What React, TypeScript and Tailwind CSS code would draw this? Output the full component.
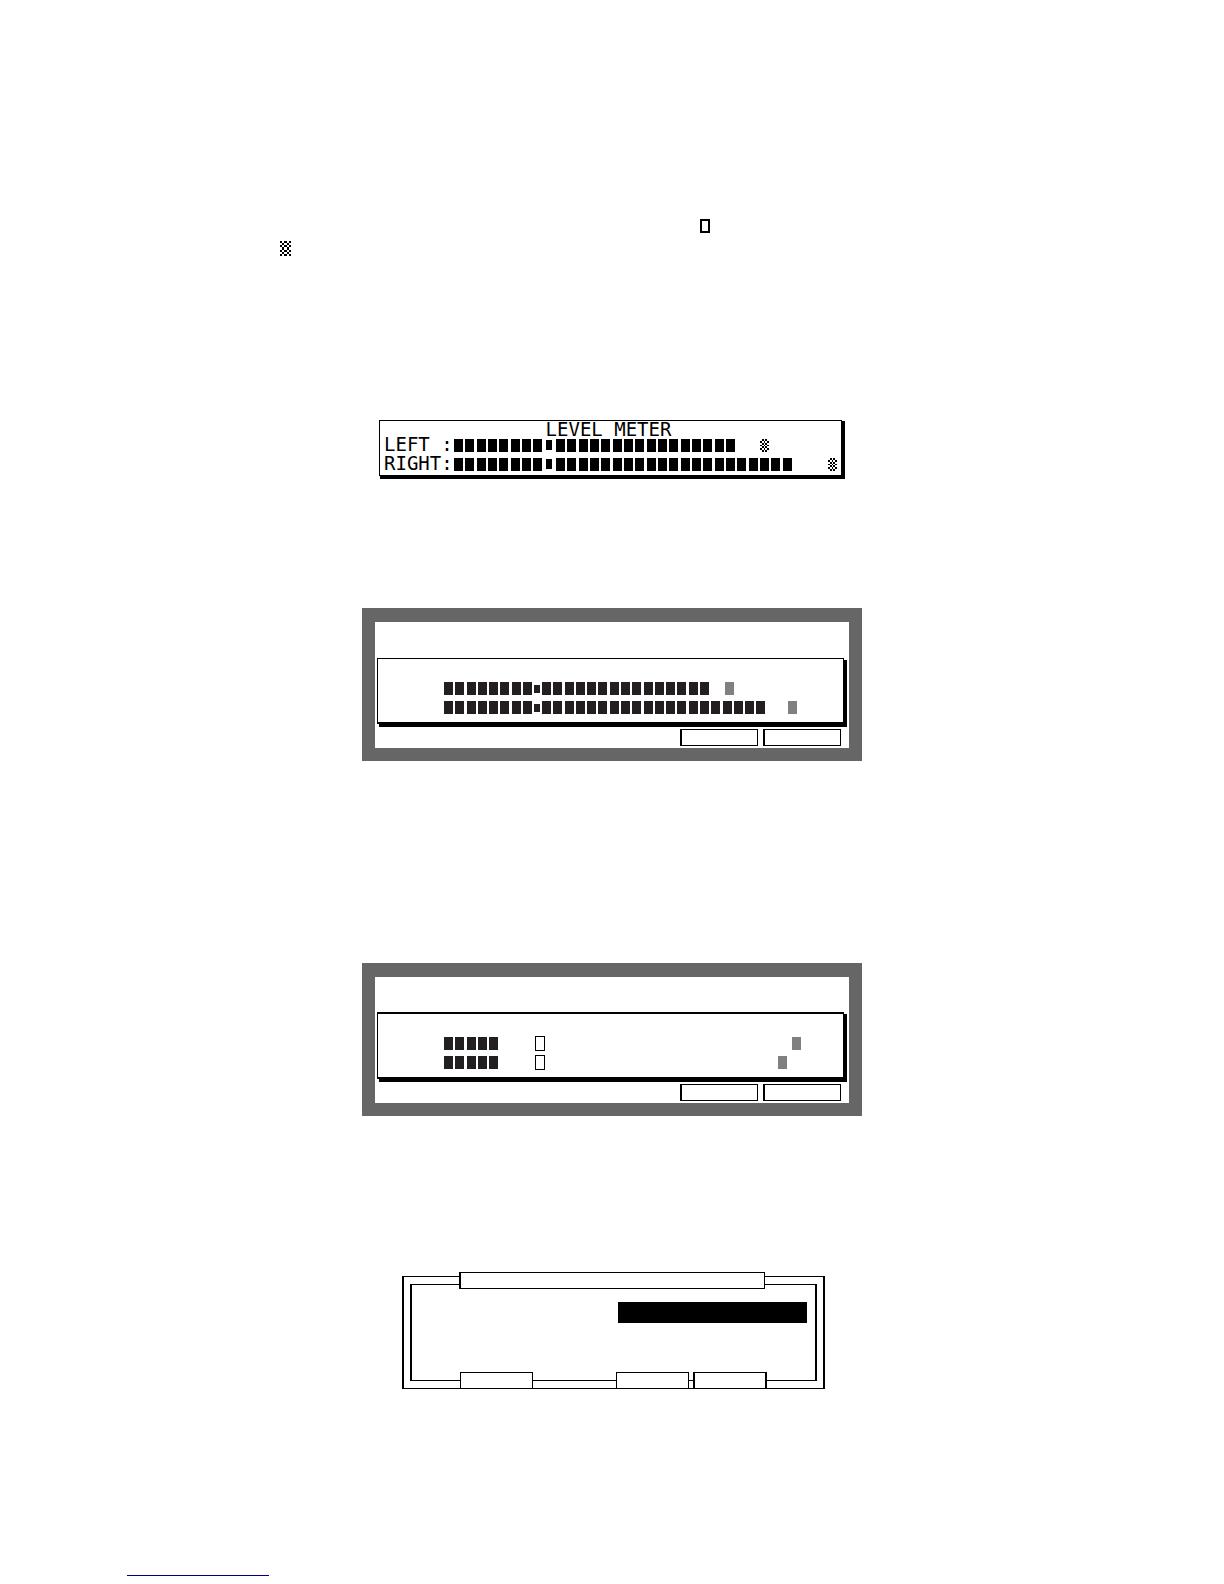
type MeterItem = {
  kind: "bar" | "dot" | "box" | "peak" | "checker";
  x: number;
  width: number;
};

// n bars laid side by side, the first one at x
const bars = (n: number, x: number, pitch = 79 / 7): MeterItem[] =>
  Array.from({ length: n }, (_, i) => ({
    kind: "bar",
    x: Math.round(x + i * pitch),
    width: 9,
  }));

interface CheckerProps {
  x?: number;
  y?: number;
  width: number;
  height: number;
  odd?: boolean;
}

function Checker({ x = 0, y = 0, width, height, odd = false }: CheckerProps) {
  const cells = [];
  for (let row = 0; row < 7; row++) {
    for (let col = 0; col < 5; col++) {
      if ((row + col) % 2 === (odd ? 1 : 0)) {
        const left = Math.round((col * width) / 5);
        const top = Math.round((row * height) / 7);
        cells.push(
          <rect
            key={`${row}-${col}`}
            x={x + left}
            y={y + top}
            width={Math.round(((col + 1) * width) / 5) - left}
            height={Math.round(((row + 1) * height) / 7) - top}
          />
        );
      }
    }
  }
  return <g fill="#000">{cells}</g>;
}

interface MeterProps {
  items: MeterItem[];
  color: string;
  dotHeight?: number;
}

function Meter({ items, color, dotHeight = 8 }: MeterProps) {
  return (
    <svg width="386" height="15" shapeRendering="crispEdges" className="block shrink-0">
      {items.map(({ kind, x, width }) => {
        if (kind === "checker") {
          return <Checker key={x} x={x} y={1} width={width} height={13} odd />;
        }
        if (kind === "box") {
          return (
            <g key={x}>
              <rect x={x} y={0} width={width} height={15} fill="#000" />
              <rect x={x + 1} y={1} width={width - 2} height={13} fill="#fff" />
            </g>
          );
        }
        if (kind === "dot") {
          const y = dotHeight === 8 ? 4 : 2;
          return <rect key={x} x={x} y={y} width={width} height={dotHeight} fill={color} />;
        }
        return (
          <rect
            key={x}
            x={x}
            y={1}
            width={width}
            height={13}
            fill={kind === "peak" ? "#808080" : color}
          />
        );
      })}
    </svg>
  );
}

const lcdLeft: MeterItem[] = [
  ...bars(8, 0, 34 / 3),
  { kind: "dot", x: 92, width: 6 },
  ...bars(16, 102, 34 / 3),
  { kind: "checker", x: 306, width: 9 },
];
const lcdRight: MeterItem[] = [
  ...bars(8, 0, 34 / 3),
  { kind: "dot", x: 92, width: 6 },
  ...bars(21, 102, 34 / 3),
  { kind: "checker", x: 374, width: 9 },
];

const playRows: MeterItem[][] = [
  [
    ...bars(8, 0),
    { kind: "dot", x: 90, width: 6 },
    ...bars(15, 98),
    { kind: "peak", x: 281, width: 9 },
  ],
  [
    ...bars(8, 0),
    { kind: "dot", x: 90, width: 6 },
    ...bars(20, 98),
    { kind: "peak", x: 344, width: 9 },
  ],
];

const holdRows: MeterItem[][] = [
  [...bars(5, 0), { kind: "box", x: 91, width: 10 }, { kind: "peak", x: 348, width: 9 }],
  [...bars(5, 0), { kind: "box", x: 91, width: 10 }, { kind: "peak", x: 334, width: 9 }],
];

function LevelMeter() {
  return (
    <div className="mt-[164px] flex justify-center pr-[3px]">
      <section className="w-[463px] border border-black pb-[3px] font-['DejaVu_Sans_Mono',monospace] text-[19px] shadow-[3px_1px_0_#000,1px_3px_0_#000,3px_3px_0_#000]">
        <h2 className="pr-1 text-center leading-[17px]">LEVEL METER</h2>
        <div className="flex h-[15px] items-start pl-1 leading-3">
          <span className="w-[70px] shrink-0 whitespace-pre">LEFT :</span>
          <Meter items={lcdLeft} color="#000" dotHeight={10} />
        </div>
        <div className="mt-1 flex h-[15px] items-start pl-1 leading-3">
          <span className="w-[70px] shrink-0">RIGHT:</span>
          <Meter items={lcdRight} color="#000" dotHeight={10} />
        </div>
      </section>
    </div>
  );
}

interface ScreenProps {
  rows: MeterItem[][];
  thick?: boolean;
}

function Screen({ rows, thick = false }: ScreenProps) {
  return (
    <section className="mx-auto w-[500px] border-[13px] border-t-[14px] border-[#666]">
      <div
        className={`${
          thick ? "mt-[35px] border-t-2" : "mt-9 border-t"
        } ml-0.5 w-[467px] border-x border-b-2 border-black pt-[22px] pb-[7px] shadow-[3px_2px_0_#000,2px_3px_0_#000,3px_3px_0_#000]`}
      >
        <div className="flex flex-col gap-1 pl-[66px]">
          {rows.map((items, i) => (
            <Meter key={i} items={items} color="#231f20" />
          ))}
        </div>
      </div>
      <div className="mt-[5px] mr-2 mb-0.5 flex justify-end gap-[5px]">
        <button aria-label="Left key" className="h-[17px] w-[78px] border border-l-2 border-black" />
        <button aria-label="Right key" className="h-[17px] w-[78px] border border-l-2 border-black" />
      </div>
    </section>
  );
}

function Dialog() {
  return (
    <div className="mt-40 flex justify-center pl-0.5">
      <section className="w-[423px] border-x-2 border-y border-black px-1.5 py-[7px]">
        <div className="flex flex-col border-x-2 border-y border-black">
          <h2 className="-mt-[13px] ml-[47px] h-[17px] w-[306px] border border-l-2 border-black bg-white" />
          <input
            aria-label="Value"
            className="mt-[13px] mr-2 h-[21px] w-[189px] self-end bg-black text-white outline-none"
          />
          <div className="mt-[49px] -mb-[9px] ml-12 flex">
            <button aria-label="First key" className="h-[17px] w-[73px] border border-black bg-white" />
            <button aria-label="Second key" className="ml-[83px] h-[17px] w-[73px] border border-black bg-white" />
            <button aria-label="Third key" className="ml-1 h-[17px] w-[74px] border-x-2 border-y border-black bg-white" />
          </div>
        </div>
      </section>
    </div>
  );
}

export default function App() {
  return (
    <main className="flex flex-col bg-white pt-[219px] pb-2 text-black">
      <div className="ml-[280px]">
        <div className="ml-[420px] h-[14px] w-[10px] border-2 border-black" />
        <svg width="11" height="15" shapeRendering="crispEdges" className="mt-2 block">
          <Checker width={11} height={15} />
        </svg>
      </div>
      <LevelMeter />
      <div className="mt-[132px]">
        <Screen rows={playRows} />
      </div>
      <div className="mt-[202px]">
        <Screen rows={holdRows} thick />
      </div>
      <Dialog />
      <a href="#" aria-label="Footer link" className="mt-[186px] ml-[127px] w-[142px] border-b border-[#000080]" />
    </main>
  );
}
